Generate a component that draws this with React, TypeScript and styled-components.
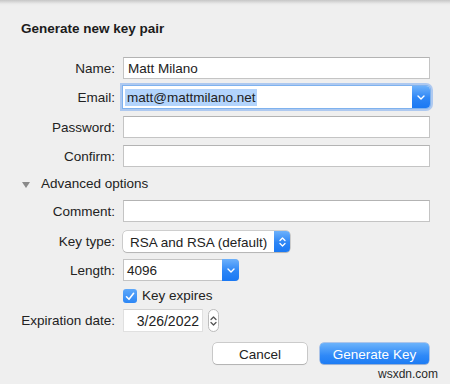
import React from 'react';
import styled, { createGlobalStyle } from 'styled-components';

const Global = createGlobalStyle`
  html, body { margin: 0; padding: 0; background: #efefef; }
  body {
    font-family: "Liberation Sans", Arial, Helvetica, sans-serif;
    font-size: 13.5px;
    color: #222;
  }
`;

const Sheet = styled.div`
  width: 450px;
  height: 384px;
  box-sizing: border-box;
  display: flex;
  flex-direction: column;
  background: #efefef;
  overflow: hidden;
`;

const TopShadow = styled.div`
  height: 6px;
  flex: none;
  background: linear-gradient(#c6c6c6 0, #d9d9d9 2px, #ebebeb 4px, #efefef 6px);
`;

const Title = styled.div`
  margin: 15px 0 0 21px;
  font-weight: bold;
  font-size: 13.5px;
  line-height: 16px;
  color: #1c1c1c;
`;

const Row = styled.div<{ $mt: number; $h: number }>`
  display: grid;
  grid-template-columns: 115px 307px;
  column-gap: 8px;
  align-items: center;
  height: ${(p) => p.$h}px;
  margin-top: ${(p) => p.$mt}px;
  flex: none;
`;

const Label = styled.div`
  text-align: right;
  line-height: 16px;
  padding-top: 1px;
  white-space: nowrap;
`;

const Field = styled.div`
  height: 100%;
  box-sizing: border-box;
  background: #fff;
  border: 1px solid #c4c4c4;
  border-top-color: #b3b3b3;
  padding: 1px 4px 0;
  display: flex;
  align-items: center;
  white-space: nowrap;
`;

const Combo = styled.div<{ $w?: number; $focus?: boolean }>`
  height: 100%;
  width: ${(p) => (p.$w ? `${p.$w}px` : '100%')};
  box-sizing: border-box;
  display: flex;
  background: #fff;
  border-radius: 0 4px 4px 0;
  box-shadow: ${(p) =>
    p.$focus
      ? '0 0 0 1px #7fb2ee, 0 0 0 3px rgba(120, 170, 240, 0.55)'
      : 'inset 0 0 0 1px #c4c4c4'};
`;

const ComboText = styled.div`
  flex: 1;
  display: flex;
  align-items: center;
  padding: 1px 2px 0 4px;
  white-space: nowrap;
`;

const Selected = styled.span`
  background: #b3d4fc;
  padding: 0 1px 0 2px;
  margin-left: -2px;
  line-height: 17px;
`;

const BlueButton = styled.div<{ $w: number }>`
  width: ${(p) => p.$w}px;
  flex: none;
  display: flex;
  align-items: center;
  justify-content: center;
  background: linear-gradient(#6db1fb, #2d86f6 55%, #1a78f3);
  border-radius: 0 4px 4px 0;
`;

const Popup = styled.div<{ $w: number }>`
  width: ${(p) => p.$w}px;
  height: 100%;
  box-sizing: border-box;
  display: flex;
  background: #fff;
  border-radius: 4px;
  box-shadow: 0 0 0 0.5px rgba(0, 0, 0, 0.28), 0 1px 1px rgba(0, 0, 0, 0.12);
`;

const PopupText = styled.div`
  flex: 1;
  display: flex;
  align-items: center;
  padding: 1px 0 0 7px;
  white-space: nowrap;
`;

const Disclosure = styled.div`
  grid-column: 1 / span 2;
  display: flex;
  align-items: center;
  padding-left: 22px;
  gap: 11px;
  line-height: 16px;
`;

const Triangle = styled.div`
  width: 0;
  height: 0;
  border-left: 4px solid transparent;
  border-right: 4px solid transparent;
  border-top: 6px solid #8a8a8a;
  margin-top: 1px;
`;

const CheckLine = styled.div`
  grid-column: 2;
  display: flex;
  align-items: center;
  gap: 5px;
  line-height: 16px;
`;

const CheckBox = styled.div`
  width: 14px;
  height: 14px;
  box-sizing: border-box;
  border-radius: 3px;
  background: linear-gradient(#5ea8fa, #2c86f5);
  display: flex;
  align-items: center;
  justify-content: center;
`;

const DateLine = styled.div`
  height: 100%;
  display: flex;
  align-items: center;
  gap: 5px;
`;

const DateField = styled.div`
  width: 80px;
  height: 100%;
  box-sizing: border-box;
  background: #fff;
  border: 1px solid #e0e0e0;
  border-top-color: #d2d2d2;
  display: flex;
  align-items: center;
  justify-content: flex-end;
  padding: 1px 3px 0 0;
  font-size: 14px;
`;

const Stepper = styled.div`
  width: 11px;
  height: 23px;
  box-sizing: border-box;
  border: 1px solid #bcbcbc;
  border-radius: 6px;
  background: #fff;
  display: flex;
  align-items: center;
  justify-content: center;
`;

const Buttons = styled.div`
  display: flex;
  justify-content: flex-end;
  gap: 13px;
  padding-right: 21px;
  margin-top: 11px;
  height: 21px;
  flex: none;
`;

const Button = styled.div<{ $w: number; $primary?: boolean }>`
  width: ${(p) => p.$w}px;
  height: 100%;
  box-sizing: border-box;
  border-radius: 4px;
  display: flex;
  align-items: center;
  justify-content: center;
  padding-top: 1px;
  color: ${(p) => (p.$primary ? '#fff' : '#222')};
  background: ${(p) =>
    p.$primary ? 'linear-gradient(#6cb3fb, #2f89f7 60%, #1d7cf4)' : '#fff'};
  box-shadow: ${(p) =>
    p.$primary
      ? '0 0 0 0.5px rgba(20, 100, 220, 0.6), 0 1px 1px rgba(0, 0, 0, 0.12)'
      : '0 0 0 0.5px rgba(0, 0, 0, 0.3), 0 1px 1px rgba(0, 0, 0, 0.12)'};
`;

const Watermark = styled.div`
  display: flex;
  justify-content: flex-end;
  padding-right: 12px;
  margin-top: 3px;
  font-size: 12px;
  line-height: 14px;
  color: #2a2a2a;
`;

const ChevronDown = () => (
  <svg width="8" height="5" viewBox="0 0 8 5">
    <path d="M1 1 L4 4 L7 1" fill="none" stroke="#fff" strokeWidth="1.4" strokeLinecap="round" strokeLinejoin="round" />
  </svg>
);

const UpDown = ({ color }: { color: string }) => (
  <svg width="7" height="12" viewBox="0 0 7 12">
    <path d="M1 4.5 L3.5 2 L6 4.5" fill="none" stroke={color} strokeWidth="1.3" strokeLinecap="round" strokeLinejoin="round" />
    <path d="M1 7.5 L3.5 10 L6 7.5" fill="none" stroke={color} strokeWidth="1.3" strokeLinecap="round" strokeLinejoin="round" />
  </svg>
);

const Check = () => (
  <svg width="10" height="9" viewBox="0 0 10 9">
    <path d="M1.5 4.8 L4 7.3 L8.6 1.3" fill="none" stroke="#fff" strokeWidth="1.6" strokeLinecap="round" strokeLinejoin="round" />
  </svg>
);

export default function App() {
  return (
    <>
      <Global />
      <Sheet>
        <TopShadow />
        <Title>Generate new key pair</Title>

        <Row $mt={20} $h={22}>
          <Label>Name:</Label>
          <Field>Matt Milano</Field>
        </Row>

        <Row $mt={7} $h={22}>
          <Label>Email:</Label>
          <Combo $focus>
            <ComboText>
              <Selected>matt@mattmilano.net</Selected>
            </ComboText>
            <BlueButton $w={18}>
              <ChevronDown />
            </BlueButton>
          </Combo>
        </Row>

        <Row $mt={8} $h={22}>
          <Label>Password:</Label>
          <Field />
        </Row>

        <Row $mt={7} $h={22}>
          <Label>Confirm:</Label>
          <Field />
        </Row>

        <Row $mt={9} $h={16}>
          <Disclosure>
            <Triangle />
            <span>Advanced options</span>
          </Disclosure>
        </Row>

        <Row $mt={8} $h={22}>
          <Label>Comment:</Label>
          <Field />
        </Row>

        <Row $mt={9} $h={21}>
          <Label>Key type:</Label>
          <Popup $w={167}>
            <PopupText>RSA and RSA (default)</PopupText>
            <BlueButton $w={16}>
              <UpDown color="#fff" />
            </BlueButton>
          </Popup>
        </Row>

        <Row $mt={7} $h={22}>
          <Label>Length:</Label>
          <Combo $w={116}>
            <ComboText>4096</ComboText>
            <BlueButton $w={17}>
              <ChevronDown />
            </BlueButton>
          </Combo>
        </Row>

        <Row $mt={7} $h={14}>
          <CheckLine>
            <CheckBox>
              <Check />
            </CheckBox>
            <span>Key expires</span>
          </CheckLine>
        </Row>

        <Row $mt={7} $h={23}>
          <Label>Expiration date:</Label>
          <DateLine>
            <DateField>3/26/2022</DateField>
            <Stepper>
              <UpDown color="#555" />
            </Stepper>
          </DateLine>
        </Row>

        <Buttons>
          <Button $w={94}>Cancel</Button>
          <Button $w={109} $primary>
            Generate Key
          </Button>
        </Buttons>

        <Watermark>wsxdn.com</Watermark>
      </Sheet>
    </>
  );
}
